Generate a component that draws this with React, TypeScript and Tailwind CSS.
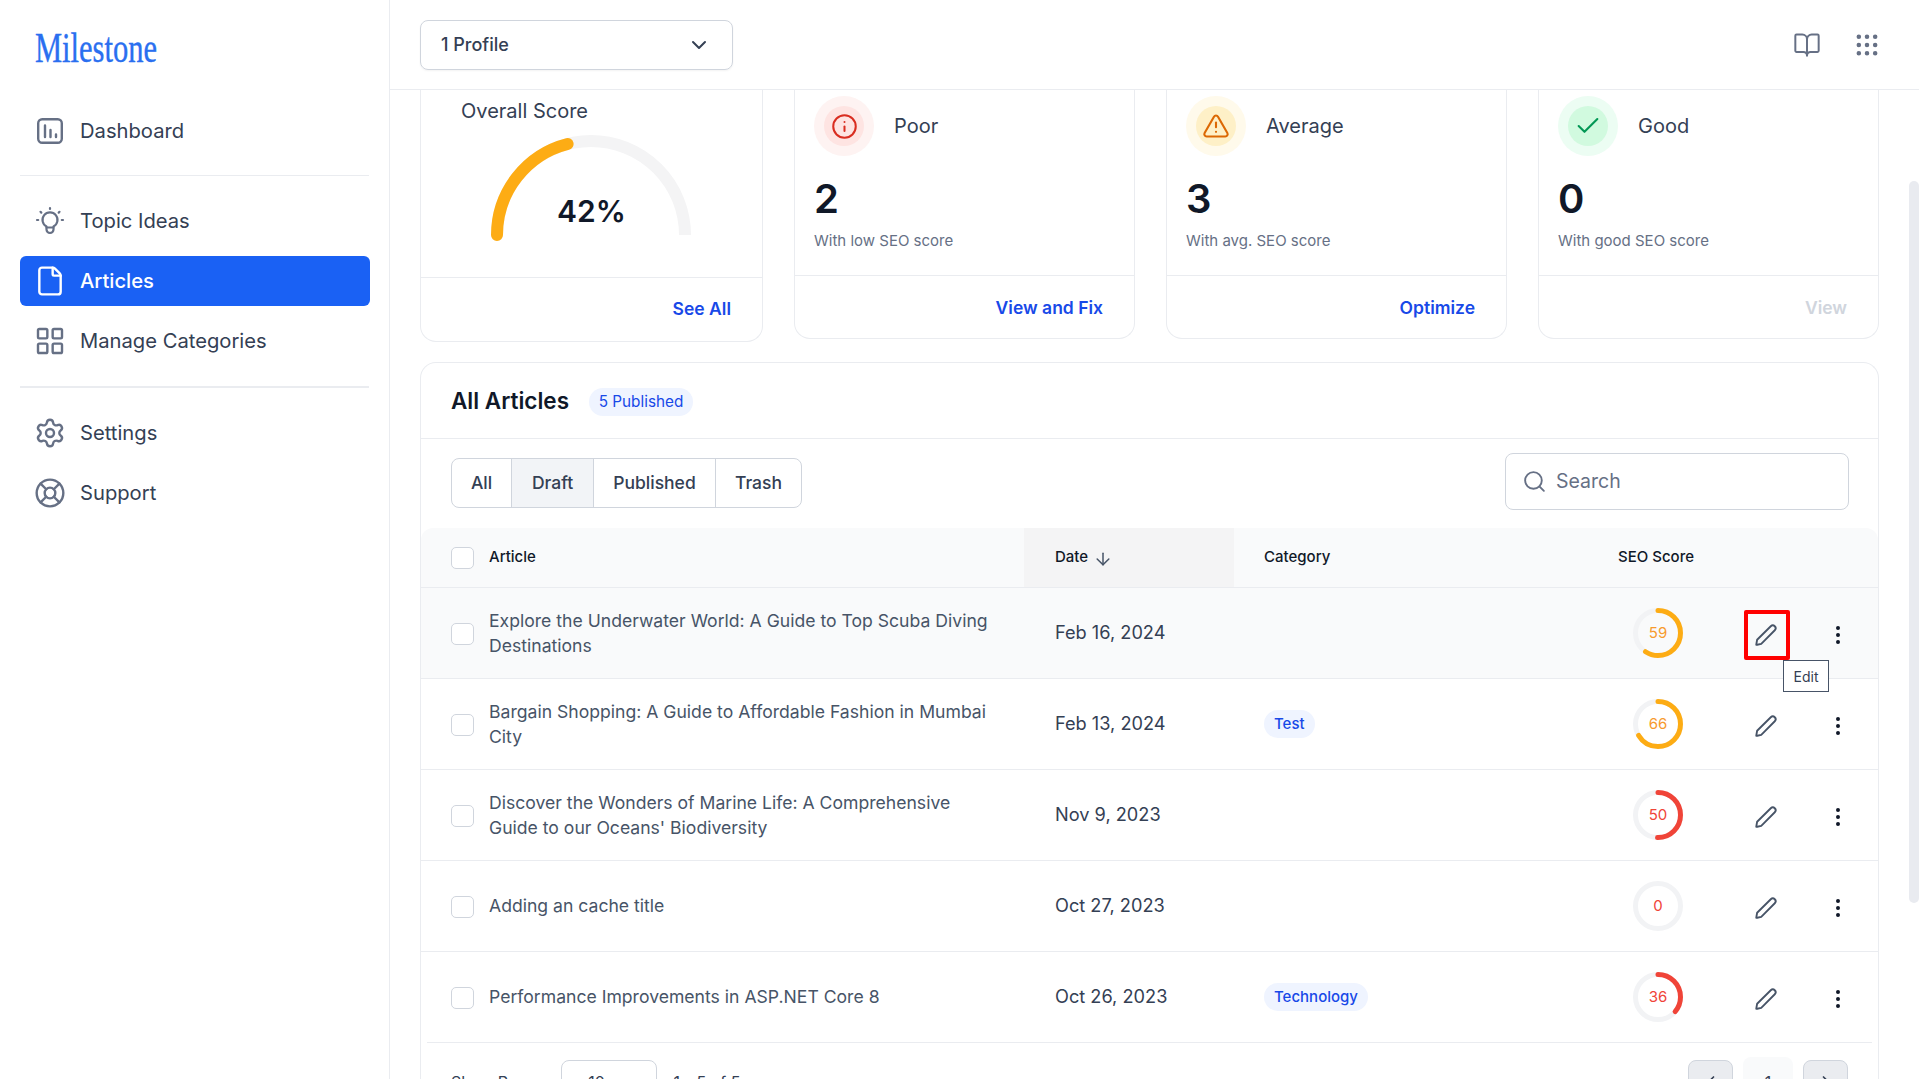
import React from "react";
import {
  ArrowDown,
  BookOpen,
  Check,
  ChevronDown,
  ChevronLeft,
  ChevronRight,
  EllipsisVertical,
  File,
  Grip,
  Info,
  LayoutGrid,
  LifeBuoy,
  Search,
  Settings,
  TriangleAlert,
} from "lucide-react";

const articles = [
  { title: "Explore the Underwater World: A Guide to Top Scuba Diving Destinations", date: "Feb 16, 2024", category: "", score: 59, hover: true },
  { title: "Bargain Shopping: A Guide to Affordable Fashion in Mumbai City", date: "Feb 13, 2024", category: "Test", score: 66 },
  { title: "Discover the Wonders of Marine Life: A Comprehensive Guide to our Oceans' Biodiversity", date: "Nov 9, 2023", category: "", score: 50 },
  { title: "Adding an cache title", date: "Oct 27, 2023", category: "", score: 0 },
  { title: "Performance Improvements in ASP.NET Core 8", date: "Oct 26, 2023", category: "Technology", score: 36 },
];

const DashboardIcon = () => (
  <svg width="32" height="32" viewBox="0 0 32 32" fill="none" stroke="#667085" strokeWidth="2.4" strokeLinecap="round">
    <rect x="4.2" y="4.2" width="23.6" height="23.6" rx="4" />
    <path d="M11 10.5v11.5M16.5 15v7M22 19.5v2.5" />
  </svg>
);

const BulbIcon = () => (
  <svg width="32" height="32" viewBox="0 0 32 32" fill="none" stroke="#667085" strokeWidth="2.2" strokeLinecap="round" strokeLinejoin="round">
    <path d="M12.5 21.5a7.5 7.5 0 1 1 7 0v3a3.5 3.5 0 0 1-7 0z" />
    <path d="M12.5 22.5h7" />
    <path d="M16 3v1M6.5 6.8l.8.8M25.5 6.8l-.8.8M3 15h1.2M27.8 15H29" />
  </svg>
);

const PencilIcon = () => (
  <svg width="26" height="26" viewBox="0 0 24 24" fill="none" stroke="#475467" strokeWidth="1.7" strokeLinejoin="round">
    <path d="M3 21l.8-4.6L16.4 3.9a2.6 2.6 0 0 1 3.7 3.7L7.6 20.2 3.9 21z" />
  </svg>
);

const ScoreRing = ({ score }: { score: number }) => {
  const r = 22.5;
  const c = 2 * Math.PI * r;
  const color = score >= 55 ? "#fdac14" : "#f04438";
  const textColor = score >= 55 ? "text-[#f79a2e]" : "text-[#f04438]";
  return (
    <div className="relative w-[50px] h-[50px]">
      <svg width="50" height="50" viewBox="0 0 50 50" className="-rotate-90">
        <circle cx="25" cy="25" r={r} fill="none" stroke="#f2f3f5" strokeWidth="5" />
        {score > 0 && (
          <circle cx="25" cy="25" r={r} fill="none" stroke={color} strokeWidth="5" strokeLinecap="round" strokeDasharray={`${(c * score) / 100} ${c}`} />
        )}
      </svg>
      <span className={`absolute inset-0 flex items-center justify-center text-[15px] ${textColor}`}>{score}</span>
    </div>
  );
};

const NavItem = ({ icon, label, active }: { icon: React.ReactNode; label: string; active?: boolean }) => (
  <div className={`h-[50px] flex items-center gap-[14px] pl-[14px] rounded-md text-[20.2px] ${active ? "bg-[#1a61f4] text-white font-medium" : "text-[#344054]"}`}>
    {icon}
    <span>{label}</span>
  </div>
);

const StatCard = ({ icon, outer, inner, title, value, sub, action, muted }: { icon: React.ReactNode; outer: string; inner: string; title: string; value: string; sub: string; action: string; muted?: boolean }) => (
  <div className="flex-1 min-w-0 h-[249px] border border-t-0 border-[#eaecf0] rounded-b-2xl flex flex-col bg-white">
    <div className="h-[186px] px-[19px] pt-[6px] border-b border-[#eaecf0]">
      <div className="flex items-center gap-5">
        <div className={`w-[60px] h-[60px] rounded-full flex items-center justify-center ${outer}`}>
          <div className={`w-10 h-10 rounded-full flex items-center justify-center ${inner}`}>{icon}</div>
        </div>
        <span className="text-[20px] text-[#344054]">{title}</span>
      </div>
      <div className="mt-[19px] text-[40px] leading-[48px] font-semibold text-[#101828]">{value}</div>
      <div className="mt-[6px] text-[15px] leading-6 text-[#667085]">{sub}</div>
    </div>
    <div className={`flex-1 flex items-center justify-end pr-[31px] pt-[2px] text-[17.5px] font-semibold ${muted ? "text-[#d0d5dd]" : "text-[#1849e8]"}`}>{action}</div>
  </div>
);

export default function App() {
  return (
    <div className="flex h-screen overflow-hidden bg-white [font-family:Inter,sans-serif]">
      {/* Sidebar */}
      <aside className="w-[390px] shrink-0 h-full border-r border-[#eaecf0] pl-5 pr-[19px]">
        <div className="h-[106px] pl-[15px] pt-[28px]">
          <svg width="125" height="42" viewBox="0 0 125 42">
            <text x="0" y="34" fill="#2a6ff0" stroke="#2a6ff0" strokeWidth="0.4" fontFamily="'Liberation Serif', serif" fontSize="42" textLength="122" lengthAdjust="spacingAndGlyphs">Milestone</text>
          </svg>
        </div>
        <NavItem label="Dashboard" icon={<DashboardIcon />} />
        <div className="h-px bg-[#eaecf0] mt-[19px] mb-[20px] mr-px" />
        <div className="flex flex-col gap-[10px]">
          <NavItem label="Topic Ideas" icon={<BulbIcon />} />
          <NavItem label="Articles" active icon={<File className="w-8 h-8 text-white" strokeWidth={1.8} />} />
          <NavItem label="Manage Categories" icon={<LayoutGrid className="w-8 h-8 text-[#667085]" strokeWidth={1.8} />} />
        </div>
        <div className="h-[2px] bg-[#eaecf0] mt-[20px] mb-[20px] mr-px" />
        <div className="flex flex-col gap-[10px]">
          <NavItem label="Settings" icon={<Settings className="w-8 h-8 text-[#667085]" strokeWidth={1.8} />} />
          <NavItem label="Support" icon={<LifeBuoy className="w-8 h-8 text-[#667085]" strokeWidth={1.8} />} />
        </div>
      </aside>

      <div className="flex-1 min-w-0 flex flex-col h-full">
        {/* Header */}
        <header className="h-[90px] shrink-0 border-b border-[#eaecf0] flex items-center justify-between pl-[30px] pr-[38px]">
          <div className="w-[313px] h-[50px] border border-[#d0d5dd] rounded-lg flex items-center justify-between pl-[20px] pr-[21px] text-lg font-medium text-[#344054] shadow-xs">
            1 Profile
            <ChevronDown className="w-6 h-6 text-[#344054]" />
          </div>
          <div className="flex items-center gap-[32px] text-[#667085]">
            <BookOpen className="w-7 h-7" strokeWidth={1.7} />
            <Grip className="w-7 h-7" strokeWidth={1.9} />
          </div>
        </header>

        <div className="flex-1 min-h-0 flex overflow-hidden">
          <main className="flex-1 min-w-0 pl-[30px] pr-[17px]">
            {/* Score cards, scrolled under the header */}
            <div className="flex gap-[31px] h-[272px]">
              <div className="w-[343px] shrink-0 h-[252px] border border-t-0 border-[#eaecf0] rounded-b-2xl flex flex-col">
                <div className="h-[188px] border-b border-[#eaecf0] relative">
                  <div className="pl-[40px] pt-[9px] text-[20px] leading-6 text-[#344054]">Overall Score</div>
                  <svg width="212" height="115" viewBox="0 0 212 115" className="absolute left-[64px] top-[41px]">
                    <path d="M12 104 A 94 94 0 0 1 200 104" fill="none" stroke="#f4f4f5" strokeWidth="12" />
                    <path d="M12 104 A 94 94 0 0 1 82.6 13" fill="none" stroke="#fdac14" strokeWidth="12" strokeLinecap="round" />
                  </svg>
                  <div className="absolute left-0 right-0 top-[103px] text-center text-[30px] leading-9 font-semibold text-[#101828]">42%</div>
                </div>
                <div className="flex-1 flex items-center justify-end pr-[31px] text-[17.5px] font-semibold text-[#1849e8]">See All</div>
              </div>
              <div className="flex-1 min-w-0 flex gap-[31px]">
                <StatCard title="Poor" value="2" sub="With low SEO score" action="View and Fix" outer="bg-[#fef3f2]" inner="bg-[#fee4e2]" icon={<Info className="w-[27px] h-[27px] text-[#d92d20]" strokeWidth={1.8} />} />
                <StatCard title="Average" value="3" sub="With avg. SEO score" action="Optimize" outer="bg-[#fffaeb]" inner="bg-[#fef0c7]" icon={<TriangleAlert className="w-7 h-7 text-[#dc6803]" strokeWidth={1.8} />} />
                <StatCard title="Good" value="0" sub="With good SEO score" action="View" muted outer="bg-[#ecfdf3]" inner="bg-[#d1fadf]" icon={<Check className="w-7 h-7 text-[#039855]" strokeWidth={1.8} />} />
              </div>
            </div>

            {/* Articles table */}
            <section className="border border-b-0 border-[#eaecf0] rounded-t-2xl">
              <div className="h-[76px] flex items-center gap-5 px-[30px] border-b border-[#eaecf0]">
                <h2 className="text-[22.5px] font-semibold text-[#101828]">All Articles</h2>
                <span className="h-7 w-[104px] mt-[3px] flex items-center justify-center rounded-full bg-[#eff4ff] text-[#1849e8] text-[15.3px]">5 Published</span>
              </div>
              <div className="h-[89px] flex items-center justify-between pl-[30px] pr-[29px]">
                <div className="flex h-[50px] -mt-[1px] border border-[#d0d5dd] rounded-lg overflow-hidden text-[17.5px] font-medium text-[#344054]">
                  <span className="w-[59px] flex items-center justify-center">All</span>
                  <span className="w-[83px] flex items-center justify-center bg-[#f2f4f7] border-x border-[#d0d5dd]">Draft</span>
                  <span className="w-[122px] flex items-center justify-center border-r border-[#d0d5dd]">Published</span>
                  <span className="w-[85px] flex items-center justify-center">Trash</span>
                </div>
                <div className="w-[344px] h-[57px] border border-[#d0d5dd] rounded-lg flex items-center gap-[9px] pl-[16px] -mt-[5px] text-[19.5px] text-[#667085]">
                  <Search className="w-[25px] h-[25px]" strokeWidth={1.8} />
                  <span className="mt-px">Search</span>
                </div>
              </div>
              <div className="h-[60px] flex items-stretch bg-[#f9fafb] border-b border-[#eaecf0] rounded-t-xl text-[15px] font-medium text-[#101828]">
                <div className="w-[603px] flex items-center gap-[15px] pl-[30px]">
                  <span className="w-[23px] h-[22px] rounded-[5px] border border-[#d0d5dd] bg-white" />
                  Article
                </div>
                <div className="w-[210px] flex items-center gap-[5px] pl-[31px] bg-[#f4f4f5]">
                  Date
                  <ArrowDown className="w-5 h-5 mt-[2px] text-[#475467]" strokeWidth={1.8} />
                </div>
                <div className="w-[384px] flex items-center pl-[30px]">Category</div>
                <div className="flex items-center">SEO Score</div>
              </div>
              {articles.map((a, i) => (
                <div key={a.title} className={`flex items-center ${i === articles.length - 1 ? "h-[90px]" : "h-[91px] border-b border-[#eaecf0]"} ${a.hover ? "bg-[#f9fafb]" : ""}`}>
                  <div className="w-[603px] flex items-center gap-[15px] pl-[30px] pr-[27px]">
                    <span className="w-[23px] h-[22px] shrink-0 rounded-[5px] border border-[#d0d5dd] bg-white mt-px" />
                    <span className="text-[17.6px] leading-[25px] text-[#475467] -mt-px">{a.title}</span>
                  </div>
                  <div className="w-[210px] pl-[31px] text-[18.2px] text-[#344054]">{a.date}</div>
                  <div className="w-[384px] pl-[30px]">
                    {a.category && (
                      <span className="inline-flex h-7 items-center px-[10px] rounded-full bg-[#eff4ff] text-[#1849e8] text-[15px] font-medium">{a.category}</span>
                    )}
                  </div>
                  <div className="w-[50px] ml-[15px]">
                    <ScoreRing score={a.score} />
                  </div>
                  <div className="ml-[60px] relative w-[46px] flex justify-center">
                    {a.hover && (
                      <>
                        <div className="absolute -top-[8px] left-px w-[46px] h-[50px] border-[4px] border-[#ff0000] rounded-[2px]" />
                        <div className="absolute top-[42px] left-[40px] h-8 w-[46px] flex items-center justify-center border border-[#475467] bg-white text-[14px] text-[#344054] z-10">Edit</div>
                      </>
                    )}
                    <span className="mt-[4px] flex"><PencilIcon /></span>
                  </div>
                  <EllipsisVertical className="ml-[37px] w-6 h-6 text-[#101828] mt-[4px]" />
                </div>
              ))}
              <div className="mx-[6px] px-6 pt-[14px] border-t border-[#eaecf0] flex items-center justify-between text-base text-[#344054]">
                <div className="flex items-center">
                  <span>Show Rows</span>
                  <div className="ml-[22px] w-[96px] h-[44px] border border-[#d0d5dd] rounded-lg flex items-center justify-center gap-2">
                    10
                    <ChevronDown className="w-4 h-4" />
                  </div>
                  <span className="ml-[17px]">1 - 5 of 5</span>
                </div>
                <div className="flex items-center gap-[10px]">
                  <span className="w-[45px] h-[44px] rounded-lg border border-[#d0d5dd] bg-[#eaecf0] flex items-center justify-center"><ChevronLeft className="w-5 h-5" /></span>
                  <span className="w-[50px] h-[50px] rounded-lg bg-[#f9fafb] flex items-center justify-center">1</span>
                  <span className="w-[45px] h-[44px] rounded-lg border border-[#d0d5dd] bg-[#eaecf0] flex items-center justify-center"><ChevronRight className="w-5 h-5" /></span>
                </div>
              </div>
            </section>
          </main>
          {/* Scrollbar */}
          <div className="w-[23px] shrink-0 pl-[13px] pt-[91px] pb-[176px] bg-white h-full">
            <div className="w-[10px] h-full rounded-full bg-[#e9ebf0]" />
          </div>
        </div>
      </div>
    </div>
  );
}
